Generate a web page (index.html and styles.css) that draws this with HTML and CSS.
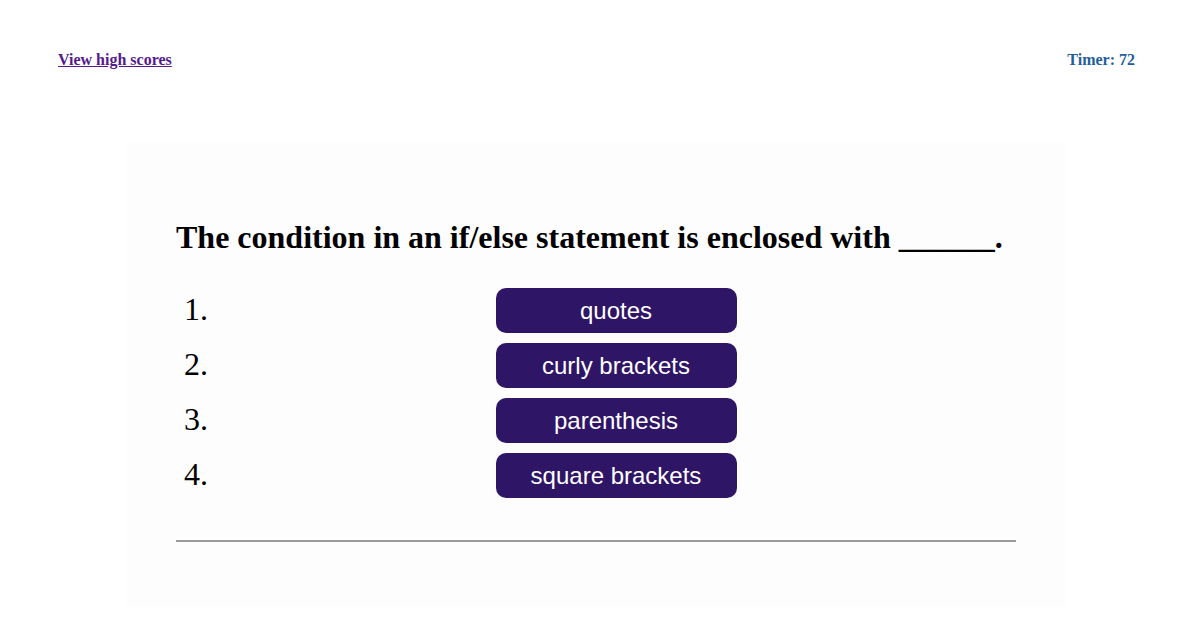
FILE: index.html
```html
<!DOCTYPE html>
<html>
<head>
<meta charset="utf-8">
<link rel="stylesheet" href="styles.css">
</head>
<body>
<header class="top">
  <a class="scores" href="#">View high scores</a>
  <div class="timer">Timer: 72</div>
</header>
<main class="card">
  <h1 class="question">The condition in an if/else statement is enclosed with ______.</h1>
  <ol class="answers">
    <li><button class="choice">quotes</button></li>
    <li><button class="choice">curly brackets</button></li>
    <li><button class="choice">parenthesis</button></li>
    <li><button class="choice">square brackets</button></li>
  </ol>
  <hr class="rule">
</main>
</body>
</html>
```
FILE: styles.css
```css
html, body {
  margin: 0;
  padding: 0;
  background: #ffffff;
  font-family: "Liberation Serif", "Times New Roman", serif;
}
.top {
  display: flex;
  justify-content: space-between;
  align-items: baseline;
  padding: 51px 58px 0 58px;
  height: 92px;
  box-sizing: border-box;
  font-size: 16px;
  font-weight: bold;
}
.scores {
  color: #551a8b;
  text-decoration: underline;
}
.timer {
  color: #1f5f9c;
}
.card {
  margin: 51px 127px 0 127px;
  width: 939px;
  height: 464px;
  box-sizing: border-box;
  background: #fdfdfd;
  padding: 72px 50px 0 49px;
}
.question {
  margin: 0 0 29px 0;
  font-size: 32px;
  font-weight: bold;
  color: #000;
  line-height: 44px;
}
.answers {
  margin: 0;
  padding-left: 40px;
  font-size: 32px;
}
.answers li {
  text-align: center;
  height: 55px;
  line-height: 43px;
}
.choice {
  width: 241px;
  height: 45px;
  border: none;
  border-radius: 10px;
  background: #2f1566;
  color: #fff;
  font-family: "Liberation Sans", Arial, sans-serif;
  font-size: 24px;
  line-height: normal;
  vertical-align: top;
  cursor: pointer;
}
.rule {
  margin: 32px 0 0 0;
  border: none;
  border-top: 2px solid #9a9a9a;
  height: 0;
}
```
